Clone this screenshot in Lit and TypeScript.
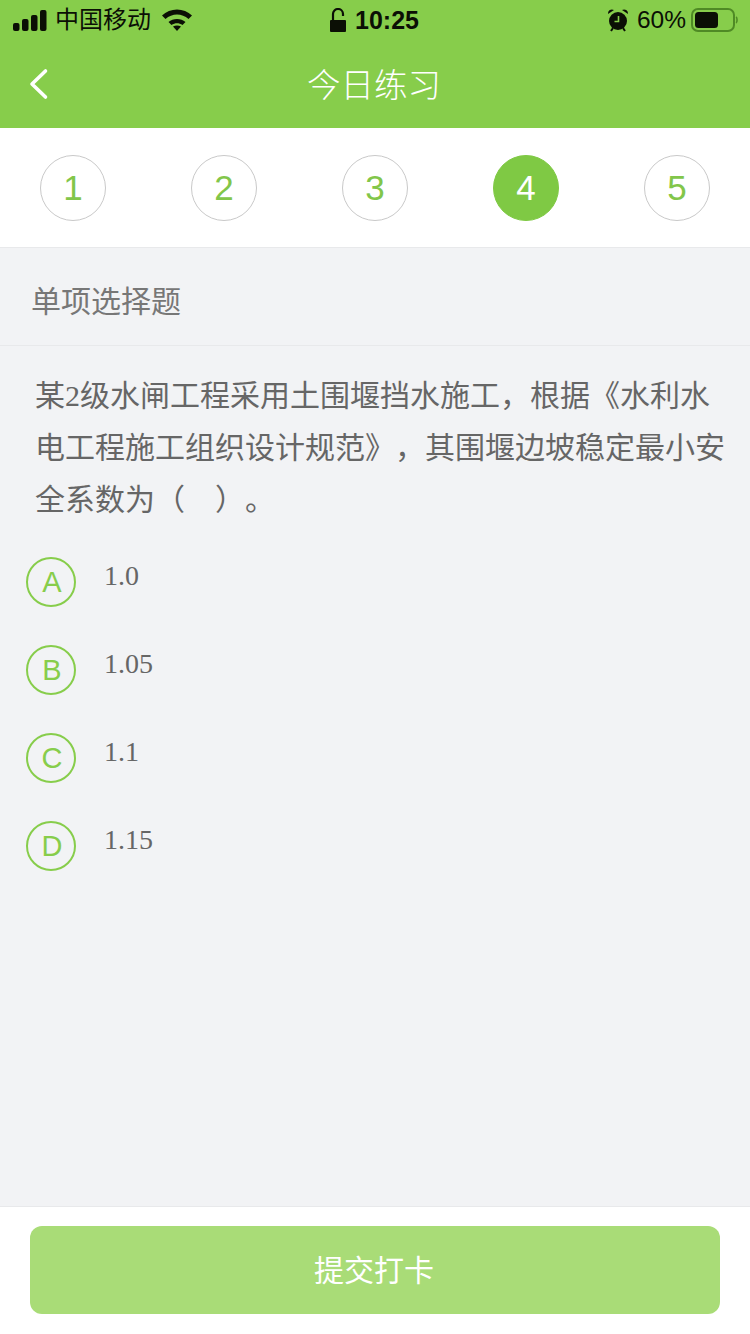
import { LitElement, html, css } from 'lit';
import { customElement } from 'lit/decorators.js';

@customElement('app-root')
export class AppRoot extends LitElement {
  static styles = css`
    :host {
      display: flex;
      flex-direction: column;
      width: 750px;
      height: 1334px;
      background: #f2f3f5;
      font-family: "Noto Sans CJK SC", "Liberation Sans", sans-serif;
      text-spacing-trim: space-all;
      overflow: hidden;
    }
    .head {
      background: #87cd4b;
      height: 128px;
      flex: none;
      display: flex;
      flex-direction: column;
    }
    .status {
      height: 40px;
      display: flex;
      align-items: center;
      justify-content: space-between;
      padding: 0 12px 0 13px;
      color: #0b0f05;
      position: relative;
    }
    .status .side {
      display: flex;
      align-items: center;
    }
    .carrier {
      font-size: 24px;
      margin: -4px 11px 0 8px;
      line-height: 30px;
    }
    .center {
      position: absolute;
      left: 330px;
      top: 5px;
      height: 30px;
      display: flex;
      align-items: center;
      gap: 9px;
      font: 700 25px "Liberation Sans", sans-serif;
    }
    .pct {
      font: 400 24.5px "Liberation Sans", sans-serif;
      margin: 0 5px 0 8px;
    }
    .nav {
      flex: 1;
      display: flex;
      align-items: center;
      justify-content: center;
      position: relative;
      color: #fff;
      font-size: 33.5px;
      font-weight: 300;
      padding: 0 2px 4px 0;
    }
    .back {
      position: absolute;
      left: 29px;
      top: 28px;
    }
    .nums {
      flex: none;
      background: #fff;
      border-bottom: 1px solid #e8e9eb;
      display: flex;
      justify-content: space-between;
      align-items: flex-start;
      padding: 27px 40px 0;
      box-sizing: border-box;
      height: 120px;
    }
    .num {
      width: 66px;
      height: 66px;
      box-sizing: border-box;
      border: 1px solid #c9c9c9;
      border-radius: 50%;
      display: flex;
      align-items: center;
      justify-content: center;
      color: #82c64a;
      font: 400 35px "Liberation Sans", sans-serif;
    }
    .num.on {
      background: #7fc944;
      border-color: #7fc944;
      color: #fff;
    }
    .kind {
      height: 98px;
      flex: none;
      box-sizing: border-box;
      border-bottom: 1px solid #e8e9eb;
      padding: 4px 31px 0;
      display: flex;
      align-items: center;
      color: #777;
      font-size: 30px;
      line-height: 36px;
    }
    .q {
      margin: 0;
      padding: 24px 20px 0 35px;
      font-size: 30px;
      line-height: 52px;
      color: #666;
      font-family: "Liberation Serif", "Noto Sans CJK SC", serif;
    }
    .opts {
      margin-top: 31px;
      padding-left: 26px;
      display: flex;
      flex-direction: column;
      gap: 38px;
    }
    .opt {
      display: flex;
      align-items: flex-start;
      height: 50px;
    }
    .letter {
      width: 50px;
      height: 50px;
      box-sizing: border-box;
      border: 2px solid #87cd4b;
      border-radius: 50%;
      display: flex;
      align-items: center;
      justify-content: center;
      color: #87cd4b;
      font: 400 29px "Liberation Sans", sans-serif;
      padding-left: 2px;
    }
    .val {
      margin: 1px 0 0 28px;
      font: 400 28px/36px "Liberation Serif", serif;
      color: #666;
    }
    .foot {
      margin-top: auto;
      height: 128px;
      flex: none;
      box-sizing: border-box;
      background: #fff;
      border-top: 1px solid #e8e9eb;
      padding: 19px 30px 0;
    }
    .btn {
      height: 88px;
      border-radius: 12px;
      background: #a9dc77;
      color: #fff;
      font-size: 30px;
      display: flex;
      align-items: center;
      justify-content: center;
      padding: 0 2px 4px 0;
      box-sizing: border-box;
    }
  `;

  render() {
    const nums = [1, 2, 3, 4, 5];
    const opts = [['A', '1.0'], ['B', '1.05'], ['C', '1.1'], ['D', '1.15']];
    return html`
      <div class="head">
        <div class="status">
          <div class="side">
            <svg width="34" height="21" viewBox="0 0 34 21" fill="#0b0f05">
              <rect x="0" y="13" width="6.5" height="8" rx="2"/>
              <rect x="9" y="9" width="6.5" height="12" rx="2"/>
              <rect x="18" y="5" width="6.5" height="16" rx="2"/>
              <rect x="27" y="0" width="6.5" height="21" rx="2"/>
            </svg>
            <span class="carrier">中国移动</span>
            <svg width="30" height="22" viewBox="0 0 30 22" fill="#0b0f05">
              <path d="M0 6.5C8-1.5 22-1.5 30 6.5L26.5 10C20 4 10 4 3.5 10Z"/>
              <path d="M6.5 13C11 9 19 9 23.5 13L20.5 16C17 13.5 13 13.5 9.5 16Z"/>
              <path d="M11 17.5C13.5 16 16.5 16 19 17.5L15 22Z"/>
            </svg>
          </div>
          <div class="center">
            <svg width="16" height="24" viewBox="0 0 16 24" fill="#0b0f05">
              <path d="M3 12.5V6a5 5 0 0 1 10 0v2" fill="none" stroke="#0b0f05" stroke-width="2.2"/>
              <rect x="0" y="12" width="16" height="12" rx="1"/>
            </svg>
            <span>10:25</span>
          </div>
          <div class="side">
            <svg width="22" height="24" viewBox="0 0 22 24">
              <circle cx="11" cy="13" r="9" fill="#0b0f05"/>
              <path d="M1 6a4 4 0 0 1 6-4ZM21 6a4 4 0 0 0-6-4Z" fill="#0b0f05"/>
              <path d="M4 23l2-3M18 23l-2-3" stroke="#0b0f05" stroke-width="2"/>
              <path d="M11.5 8v5.5H7.5" fill="none" stroke="#87cd4b" stroke-width="1.6"/>
            </svg>
            <span class="pct">60%</span>
            <svg width="47" height="24" viewBox="0 0 47 24" fill="none">
              <rect x="1" y="1" width="42" height="22" rx="6" stroke="#4f8a25" stroke-width="2"/>
              <rect x="4" y="4" width="23" height="16" rx="3.5" fill="#0b0f05"/>
              <path d="M45 9c1.4.6 1.4 5.4 0 6" stroke="#4f8a25" stroke-width="1.6"/>
            </svg>
          </div>
        </div>
        <div class="nav">
          <svg class="back" width="20" height="32" viewBox="0 0 20 32" fill="none" stroke="#fff" stroke-width="3.6" stroke-linecap="round" stroke-linejoin="round">
            <path d="M16.5 3 3 16l13.5 13"/>
          </svg>
          <span>今日练习</span>
        </div>
      </div>
      <div class="nums">
        ${nums.map(n => html`<div class="num ${n === 4 ? 'on' : ''}">${n}</div>`)}
      </div>
      <div class="kind">单项选择题</div>
      <p class="q">某2级水闸工程采用土围堰挡水施工，根据《水利水电工程施工组织设计规范》，其围堰边坡稳定最小安全系数为（　）。</p>
      <div class="opts">
        ${opts.map(([l, v]) => html`
          <div class="opt"><div class="letter">${l}</div><div class="val">${v}</div></div>
        `)}
      </div>
      <div class="foot"><div class="btn">提交打卡</div></div>
    `;
  }
}
